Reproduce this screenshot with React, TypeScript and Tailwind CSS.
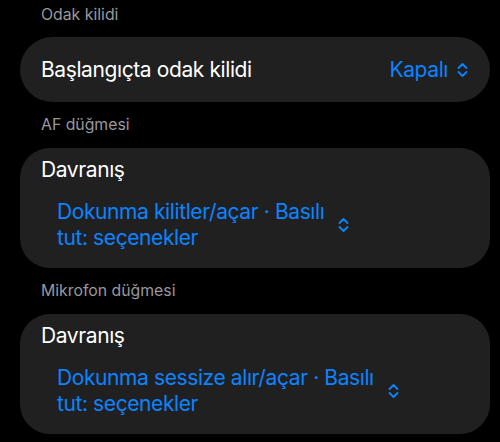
import React from "react";

const font = { fontFamily: "Inter, 'Noto Sans', sans-serif" };

function UpDown() {
  return (
    <svg width="13" height="16" viewBox="0 0 13 16" fill="none" className="shrink-0">
      <path d="M2.5 6 L6.5 2 L10.5 6" stroke="#0a84ff" strokeWidth="1.8" strokeLinecap="round" strokeLinejoin="round" />
      <path d="M2.5 10 L6.5 14 L10.5 10" stroke="#0a84ff" strokeWidth="1.8" strokeLinecap="round" strokeLinejoin="round" />
    </svg>
  );
}

function SectionTitle({ children, className }: { children: React.ReactNode; className: string }) {
  return (
    <div className={`pl-[21px] text-[15.8px] leading-[20px] text-[#98989d] ${className}`}>{children}</div>
  );
}

function BehaviorCard({ line1, line2 }: { line1: string; line2: string }) {
  return (
    <div className="bg-[#202021] rounded-[30px] pl-[21px] pr-5 pt-[9px] pb-[17px]">
      <div className="text-[21px] leading-[26px] text-white tracking-[-0.4px]">Davranış</div>
      <div className="flex items-center gap-[13px] pl-4 mt-4">
        <div className="text-[21px] leading-[26px] text-[#0a84ff] tracking-[-0.4px]">
          {line1}
          <br />
          {line2}
        </div>
        <UpDown />
      </div>
    </div>
  );
}

export default function App() {
  return (
    <div className="w-[500px] h-[442px] bg-black pl-5 pr-[10px] overflow-hidden" style={font}>
      <SectionTitle className="pt-[5px] mb-3">Odak kilidi</SectionTitle>

      <div className="h-[65px] bg-[#202021] rounded-[33px] flex items-center justify-between pl-[21px] pr-[21px]">
        <span className="text-[21px] text-white tracking-[-0.4px]">Başlangıçta odak kilidi</span>
        <div className="flex items-center gap-[8px] text-[21px] text-[#0a84ff] tracking-[-0.4px]">
          <span>Kapalı</span>
          <UpDown />
        </div>
      </div>

      <SectionTitle className="mt-[13px] mb-[13px]">AF düğmesi</SectionTitle>
      <BehaviorCard line1="Dokunma kilitler/açar · Basılı" line2="tut: seçenekler" />

      <SectionTitle className="mt-[13px] mb-[13px]">Mikrofon düğmesi</SectionTitle>
      <BehaviorCard line1="Dokunma sessize alır/açar · Basılı" line2="tut: seçenekler" />
    </div>
  );
}
